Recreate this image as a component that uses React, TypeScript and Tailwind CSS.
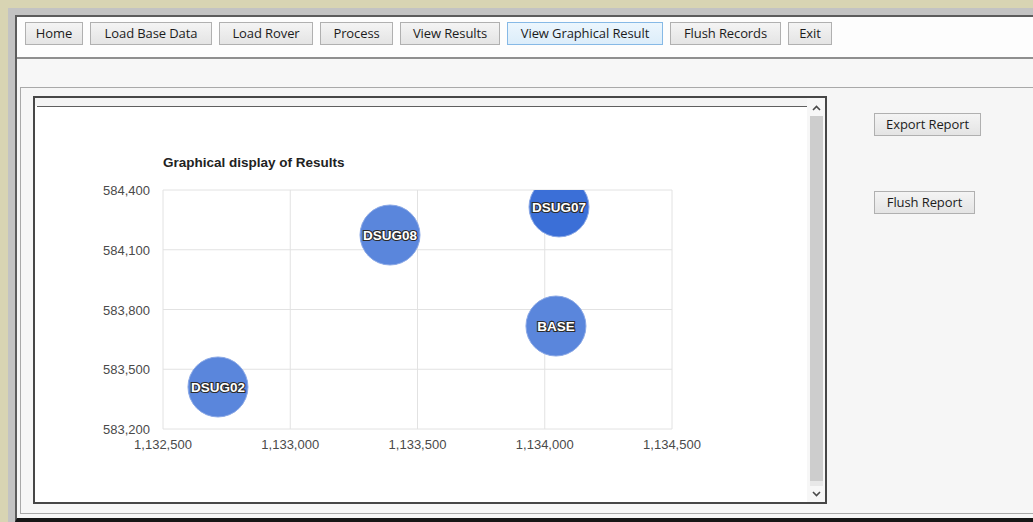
import React from 'react';

type NavItem = { label: string; w: string; active?: boolean };

const NAV: NavItem[] = [
  { label: 'Home', w: 'w-[58px]' },
  { label: 'Load Base Data', w: 'w-[122px]' },
  { label: 'Load Rover', w: 'w-[94px]' },
  { label: 'Process', w: 'w-[73px]' },
  { label: 'View Results', w: 'w-[100px]' },
  { label: 'View Graphical Result', w: 'w-[156px]', active: true },
  { label: 'Flush Records', w: 'w-[111px]' },
  { label: 'Exit', w: 'w-[44px]' },
];

// plot box in svg units
const PLOT = { left: 163, right: 672, top: 190, bottom: 429 };
const X_MIN = 1132500;
const X_MAX = 1134500;
const Y_MIN = 583200;
const Y_MAX = 584400;

const sx = (e: number) => PLOT.left + ((e - X_MIN) / (X_MAX - X_MIN)) * (PLOT.right - PLOT.left);
const sy = (n: number) => PLOT.bottom - ((n - Y_MIN) / (Y_MAX - Y_MIN)) * (PLOT.bottom - PLOT.top);

const X_TICKS = [1132500, 1133000, 1133500, 1134000, 1134500];
const Y_TICKS = [584400, 584100, 583800, 583500, 583200];

const POINTS = [
  { id: 'DSUG02', e: 1132716, n: 583411, fill: '#5a86dc' },
  { id: 'DSUG08', e: 1133392, n: 584174, fill: '#5a86dc' },
  { id: 'DSUG07', e: 1134056, n: 584315, fill: '#3b6fd7' },
  { id: 'BASE', e: 1134044, n: 583717, fill: '#5a86dc' },
];

const fmt = (v: number) => v.toLocaleString('en-US');

function WinButton({ label, className = '', active = false }: { label: string; className?: string; active?: boolean }) {
  return (
    <button
      className={`h-[23px] shrink-0 border text-[13px] leading-none tracking-[-0.1px] text-[#1c1c1c] ${
        active
          ? 'border-[#86b9e6] bg-linear-to-b from-[#ecf6fd] to-[#dcedfa]'
          : 'border-[#b0b0b0] bg-linear-to-b from-[#f4f4f4] to-[#e4e4e4]'
      } ${className}`}
    >
      {label}
    </button>
  );
}

function Chevron({ up }: { up?: boolean }) {
  return (
    <svg width="9" height="6" viewBox="0 0 9 6">
      <polyline
        points={up ? '1,5 4.5,1.5 8,5' : '1,1 4.5,4.5 8,1'}
        fill="none"
        stroke="#4a4a4a"
        strokeWidth="1.6"
      />
    </svg>
  );
}

function BubbleChart() {
  const font = "'Liberation Sans', Arial, sans-serif";
  return (
    <svg width="771" height="395" viewBox="35 107 771 395" className="block">
      <defs>
        <clipPath id="plot-clip">
          <rect x={PLOT.left} y={PLOT.top} width={PLOT.right - PLOT.left} height={PLOT.bottom - PLOT.top} />
        </clipPath>
      </defs>

      <text x={163} y={167} fontFamily={font} fontSize="13.5" fontWeight="bold" fill="#222">
        Graphical display of Results
      </text>

      {X_TICKS.map((t) => (
        <line key={`gx${t}`} x1={sx(t)} x2={sx(t)} y1={PLOT.top} y2={PLOT.bottom} stroke="#e2e2e2" strokeWidth="1" />
      ))}
      {Y_TICKS.map((t) => (
        <line key={`gy${t}`} x1={PLOT.left} x2={PLOT.right} y1={sy(t)} y2={sy(t)} stroke="#e2e2e2" strokeWidth="1" />
      ))}

      {Y_TICKS.map((t) => (
        <text key={`ly${t}`} x={150} y={sy(t) + 5} textAnchor="end" fontFamily={font} fontSize="13" fill="#4a4a4a">
          {fmt(t)}
        </text>
      ))}
      {X_TICKS.map((t) => (
        <text key={`lx${t}`} x={sx(t)} y={449} textAnchor="middle" fontFamily={font} fontSize="13" fill="#4a4a4a">
          {fmt(t)}
        </text>
      ))}

      <g clipPath="url(#plot-clip)">
        {POINTS.map((p) => (
          <circle key={p.id} cx={sx(p.e)} cy={sy(p.n)} r={30} fill={p.fill} stroke="#8aa8e6" strokeWidth="1" />
        ))}
      </g>
      {POINTS.map((p) => (
        <text
          key={`t${p.id}`}
          x={sx(p.e)}
          y={sy(p.n) + 5}
          textAnchor="middle"
          fontFamily={font}
          fontSize="13.5"
          fontWeight="bold"
          fill="#ffffff"
          stroke="#2b2b2b"
          strokeWidth="2.2"
          paintOrder="stroke"
        >
          {p.id}
        </text>
      ))}
    </svg>
  );
}

export default function App() {
  return (
    <div className="h-[522px] w-[1033px] overflow-hidden bg-[#d8d4b3] pl-[8px] pt-[8px] font-['Open_Sans',sans-serif]">
      <div className="h-full border-l-[7px] border-t-[7px] border-[#c3c3c3]">
        <div className="flex h-full flex-col border-b-4 border-l-2 border-t-2 border-b-[#161616] border-l-[#5c5c5c] border-t-[#5c5c5c] bg-[#f6f6f6]">
          {/* top toolbar */}
          <div className="flex h-[42px] shrink-0 items-start gap-[7px] border-b-2 border-[#8f8f8f] bg-[#fdfdfd] pl-[8px] pt-[5px]">
            {NAV.map((b) => (
              <WinButton key={b.label} label={b.label} active={b.active} className={b.w} />
            ))}
          </div>

          <div className="h-[28px] shrink-0 bg-[#f7f7f7]" />

          {/* main panel */}
          <div className="mb-[4px] ml-[3px] flex flex-1 border-b border-l border-t border-[#a9a9a9] bg-[#f6f6f6] pl-[12px] pt-[8px]">
            <div className="flex h-[408px] w-[794px] shrink-0 border-2 border-[#474747] bg-white">
              <div className="flex flex-1 flex-col">
                <div className="h-[8px] bg-[#f4f4f4]" />
                <div className="ml-[2px] h-px bg-[#5f5f5f]" />
                <div className="flex-1 bg-white">
                  <BubbleChart />
                </div>
              </div>
              <div className="flex w-[18px] flex-col items-center bg-[#f7f7f7]">
                <div className="flex h-[18px] items-center justify-center pt-px">
                  <Chevron up />
                </div>
                <div className="w-[13px] flex-1 bg-[#cdcdcd]" />
                <div className="h-[5px] w-[13px] bg-[#e8e8e8]" />
                <div className="flex h-[16px] items-center justify-center">
                  <Chevron />
                </div>
              </div>
            </div>

            <div className="ml-[47px] flex flex-col items-start pt-[17px]">
              <WinButton label="Export Report" className="w-[107px]" />
              <WinButton label="Flush Report" className="mt-[55px] w-[101px]" />
            </div>
          </div>
        </div>
      </div>
    </div>
  );
}
